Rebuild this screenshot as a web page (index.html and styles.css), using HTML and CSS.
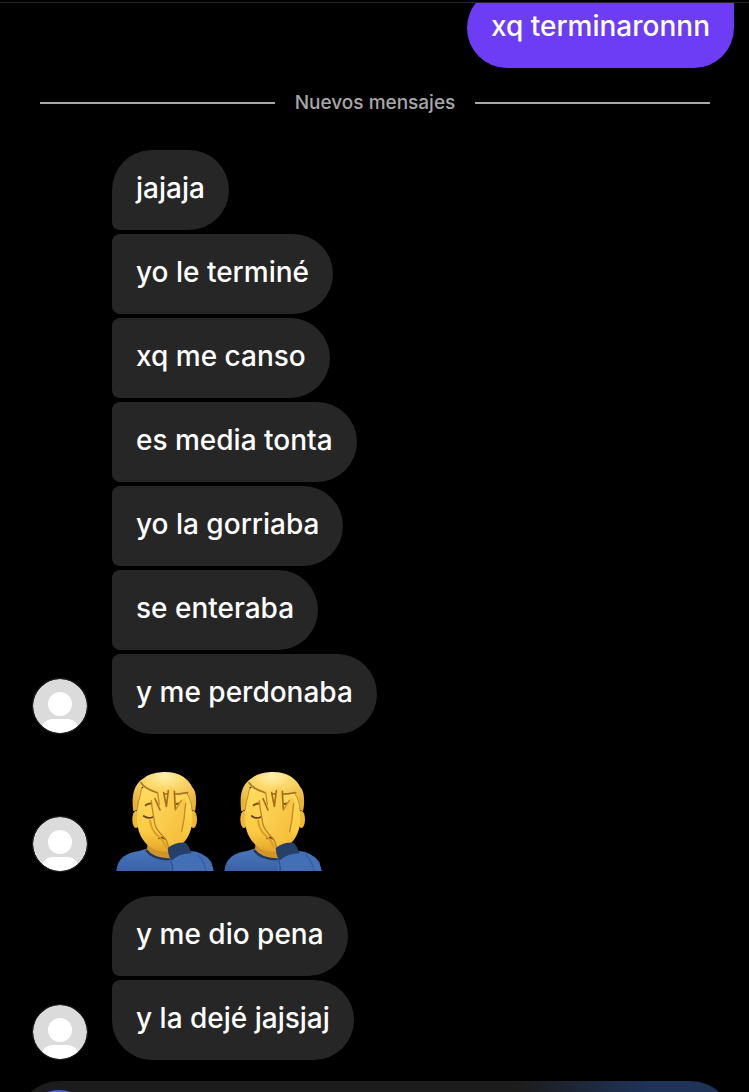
FILE: index.html
```html
<!DOCTYPE html>
<html lang="es">
<head>
    <meta charset="UTF-8">
    <meta name="viewport" content="width=device-width, initial-scale=1.0">
    <title>Chat</title>
    <link rel="stylesheet" href="styles.css">
</head>
<body>

<!-- Shared drawings -->
<svg class="sprites" aria-hidden="true">
    <defs>
        <linearGradient id="skin" x1="0" y1="0" x2="0" y2="1">
            <stop offset="0" stop-color="#ffdc62"/>
            <stop offset="0.7" stop-color="#fbcb42"/>
            <stop offset="1" stop-color="#e6a62a"/>
        </linearGradient>
        <linearGradient id="hand" x1="0" y1="0" x2="1" y2="1">
            <stop offset="0" stop-color="#ffdb62"/>
            <stop offset="1" stop-color="#f4b934"/>
        </linearGradient>
        <radialGradient id="hair" cx="0.5" cy="0.1" r="0.8">
            <stop offset="0" stop-color="#fff0b0"/>
            <stop offset="0.35" stop-color="#fddb70"/>
            <stop offset="1" stop-color="#e9b238"/>
        </radialGradient>
        <linearGradient id="shirt" x1="0" y1="0" x2="0" y2="1">
            <stop offset="0" stop-color="#4a77bd"/>
            <stop offset="1" stop-color="#3a62a8"/>
        </linearGradient>
    </defs>
    <symbol id="avatar" viewBox="0 0 54 54">
        <circle cx="27" cy="27" r="27" fill="#dbdbdb"/>
        <circle cx="27" cy="25" r="12" fill="#fff"/>
        <path d="M9 47Q12 40 20 40H34Q42 40 45 47A27 27 0 0 1 9 47Z" fill="#fff"/>
    </symbol>
    <symbol id="facepalm" viewBox="33 33 294 300">
        <path d="M34 333C37 296 64 277 103 273L130 264H205L255 275C296 279 320 298 326 333Z" fill="url(#shirt)"/>
        <path d="M128 240H204V296Q156 302 126 270Z" fill="#d2952a"/>
        <path d="M123 270Q145 300 198 298" fill="none" stroke="#233a60" stroke-width="7"/>
        <ellipse cx="93" cy="178" rx="11" ry="26" fill="#f3b735"/>
        <ellipse cx="265" cy="178" rx="11" ry="26" fill="#f3b735"/>
        <path d="M96 90Q178 60 262 90V180C260 236 222 274 177 275C132 272 98 236 96 180Z" fill="url(#skin)"/>
        <path d="M85 154C78 103 88 72 116 55Q134 38 174 36C224 34 252 58 262 82C276 95 275 132 270 154L261 149C260 126 256 110 245 101Q202 112 154 99Q127 92 111 80Q106 102 102 126L97 150Z" fill="url(#hair)"/>
        <path d="M108 68Q117 85 153 97Q195 108 248 98" fill="none" stroke="#a9741e" stroke-width="5" stroke-linecap="round"/>
        <path d="M110 83Q105 111 100 126L96 150M246 101Q260 121 261 151" fill="none" stroke="#c48e2b" stroke-width="3" stroke-linecap="round"/>
        <path d="M122 136Q132 127 146 132M214 132Q222 128 230 134" fill="none" stroke="#865613" stroke-width="6" stroke-linecap="round"/>
        <path d="M116 168Q129 178 144 171" fill="none" stroke="#6a3e0b" stroke-width="5" stroke-linecap="round"/>
        <path d="M162 235Q170 230 180 236" fill="none" stroke="#6c3806" stroke-width="5" stroke-linecap="round"/>
        <path d="M135 180C138 214 158 227 172 240L184 264" fill="none" stroke="#d99e2d" stroke-width="6"/>
        <!-- Hand over the face -->
        <path d="M192 270L183 238C168 222 154 212 149 190C146 172 139 140 137 115C137 105 146 104 149 113L163 143L158 99C156 84 172 82 175 96L184 138L191 90C193 76 207 77 207 91L211 146L230 118C236 110 245 115 243 127L237 178C237 210 226 230 236 256Z" fill="url(#hand)"/>
        <path d="M139 122C141 151 147 169 149 190C153 211 168 222 183 238L191 262" fill="none" stroke="#bf8524" stroke-width="4" stroke-linecap="round"/>
        <path d="M150 116L165 150M176 98L184 139L190 92M208 94L211 148" fill="none" stroke="#a66f1a" stroke-width="5" stroke-linecap="round" stroke-linejoin="round"/>
        <path d="M158 98L163 134M211 150L229 121M242 130L237 178L230 215" fill="none" stroke="#c58c29" stroke-width="4" stroke-linecap="round"/>
        <!-- Sleeve -->
        <path d="M194 333L194 288L252 272Q299 275 319 307L326 333Z" fill="#426fb6"/>
        <path d="M188 264Q212 246 242 248Q254 260 260 280Q224 280 198 302Q188 282 188 264Z" fill="#263f68"/>
        <path d="M197 302Q204 318 201 333" fill="none" stroke="#2d5088" stroke-width="4"/>
        <path d="M278 284Q298 304 303 333" fill="none" stroke="#355e9f" stroke-width="4"/>
    </symbol>
</svg>

<div class="app">
    <div class="topbar"></div>

    <!-- Messages -->
    <main class="thread">
        <div class="sent">
            <p class="bubble purple">xq terminaronnn</p>
        </div>

        <div class="divider">Nuevos mensajes</div>

        <section class="group">
            <svg class="avatar" role="img" aria-label="Foto de perfil"><use href="#avatar"/></svg>
            <div class="messages">
                <p class="bubble">jajaja</p>
                <p class="bubble">yo le terminé</p>
                <p class="bubble">xq me canso</p>
                <p class="bubble">es media tonta</p>
                <p class="bubble">yo la gorriaba</p>
                <p class="bubble">se enteraba</p>
                <p class="bubble">y me perdonaba</p>
            </div>
        </section>

        <section class="group emoji-group">
            <svg class="avatar" role="img" aria-label="Foto de perfil"><use href="#avatar"/></svg>
            <div class="emojis">
                <svg class="emoji" role="img" aria-label="🤦‍♂️"><use href="#facepalm"/></svg>
                <svg class="emoji" role="img" aria-label="🤦‍♂️"><use href="#facepalm"/></svg>
            </div>
        </section>

        <section class="group">
            <svg class="avatar" role="img" aria-label="Foto de perfil"><use href="#avatar"/></svg>
            <div class="messages">
                <p class="bubble">y me dio pena</p>
                <p class="bubble">y la dejé jajsjaj</p>
            </div>
        </section>
    </main>

    <!-- Message box, only its top edge is in view -->
    <footer class="footer">
        <div class="composer">
            <button type="button" class="camera" aria-label="Cámara"></button>
        </div>
    </footer>
</div>

</body>
</html>
```
FILE: styles.css
```css
* {
    box-sizing: border-box;
}

body {
    margin: 0;
    background: #000;
    color: #fff;
    font-family: Inter, 'Liberation Sans', sans-serif;
    font-weight: 500;
}

.sprites {
    position: absolute;
    width: 0;
    height: 0;
}

.app {
    display: flex;
    flex-direction: column;
    height: 100vh;
    overflow: hidden;
}

.topbar {
    flex: 0 0 3px;
    border-bottom: 1px solid #262626;
}

/* Thread sticks to the bottom, older messages slide under the top bar */
.thread {
    flex: 1;
    min-height: 0;
    display: flex;
    flex-direction: column;
    justify-content: flex-end;
    padding: 0 15px 21px 32px;
    overflow: hidden;
}

.sent {
    display: flex;
    justify-content: flex-end;
}

.bubble {
    flex-shrink: 0;
    margin: 0;
    padding: 21px 24px 25px;
    background: #262626;
    border-radius: 8px 40px 40px 8px;
    font-size: 28px;
    line-height: 34px;
}

.bubble:first-child {
    border-top-left-radius: 40px;
}

.bubble:last-child {
    border-bottom-left-radius: 40px;
}

.purple {
    background: #6c3df5;
    border-radius: 40px 8px 40px 40px;
}

.divider {
    display: flex;
    align-items: center;
    gap: 20px;
    margin: 23px 24px 35px 8px;
    color: #a8a8a8;
    font-size: 19px;
    line-height: 24px;
}

.divider::before,
.divider::after {
    content: '';
    flex: 1;
    height: 2px;
    background: #a8a8a8;
}

.group {
    display: flex;
    align-items: flex-end;
    gap: 24px;
}

.avatar {
    flex-shrink: 0;
    width: 56px;
    height: 56px;
    border: 1px solid #262626;
    border-radius: 50%;
}

.messages {
    display: flex;
    flex-direction: column;
    align-items: flex-start;
    gap: 4px;
}

.emoji-group {
    margin: 37px 0 24px;
}

.emojis {
    display: flex;
    gap: 10px;
    padding: 0 4px 1px;
}

.emoji {
    width: 98px;
    height: 100px;
}

.footer {
    flex: 0 0 11px;
    padding: 0 15px 0 16px;
    overflow: hidden;
}

.composer {
    height: 88px;
    padding: 9px 8px;
    border-radius: 44px;
    background: linear-gradient(to right, #1c1c1c 70%, #1f3359 88%);
}

.camera {
    display: block;
    width: 70px;
    height: 70px;
    padding: 0;
    border: none;
    border-radius: 50%;
    background: #4264e8;
    cursor: pointer;
}
```
